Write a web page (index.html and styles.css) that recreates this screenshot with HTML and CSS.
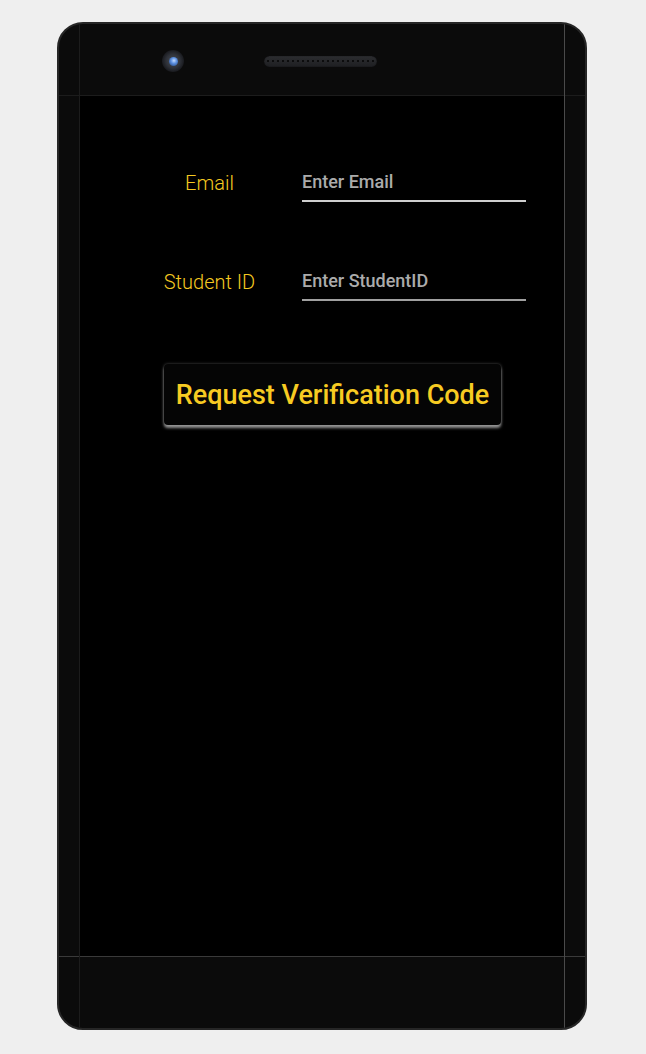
FILE: index.html
```html
<!DOCTYPE html>
<html lang="en">
<head>
<meta charset="utf-8">
<title>Request Verification Code</title>
<link rel="stylesheet" href="styles.css">
</head>
<body>
<div class="phone">
  <div class="phone-top">
    <div class="camera"><div class="lens"></div></div>
    <div class="speaker">
      <span></span><span></span><span></span><span></span><span></span><span></span><span></span><span></span><span></span><span></span><span></span><span></span><span></span><span></span><span></span><span></span><span></span><span></span><span></span><span></span><span></span><span></span>
    </div>
  </div>
  <div class="phone-middle">
    <div class="side"></div>
    <div class="screen">
      <form class="form">
        <div class="row">
          <label class="label" for="email">Email</label>
          <input class="field" id="email" type="text" placeholder="Enter Email">
        </div>
        <div class="row">
          <label class="label" for="sid">Student ID</label>
          <input class="field field-dim" id="sid" type="text" placeholder="Enter StudentID">
        </div>
        <button class="btn" type="button">Request Verification Code</button>
      </form>
    </div>
    <div class="side"></div>
  </div>
  <div class="phone-bottom"></div>
</div>
</body>
</html>
```
FILE: styles.css
```css
html, body {
  margin: 0;
  padding: 0;
  background: #efefef;
}
body {
  width: 646px;
  height: 1054px;
  overflow: hidden;
  font-family: Roboto, "Liberation Sans", sans-serif;
}
.phone {
  position: relative;
  box-sizing: border-box;
  width: 530px;
  height: 1008px;
  margin: 22px 0 0 57px;
  border: 2px solid #262626;
  border-radius: 26px;
  background: #0b0b0b;
  display: flex;
  flex-direction: column;
  overflow: hidden;
}
.phone::before,
.phone::after {
  content: "";
  position: absolute;
  top: 0;
  bottom: 0;
  width: 1px;
}
.phone::before {
  left: 20px;
  background: #1c1c1c;
}
.phone::after {
  left: 505px;
  background: #4a4a4a;
}
.phone-top {
  box-sizing: border-box;
  height: 72px;
  border-bottom: 1px solid #1c1c1c;
  display: flex;
  align-items: center;
  padding: 3px 0 0 103px;
  gap: 80px;
}
.camera {
  width: 22px;
  height: 22px;
  border-radius: 50%;
  background: radial-gradient(circle at 50% 50%, #4a4e56 0%, #2e3138 45%, #15161a 75%, #0a0a0a 100%);
  display: flex;
  align-items: center;
  justify-content: center;
}
.lens {
  width: 9px;
  height: 9px;
  border-radius: 50%;
  background: radial-gradient(circle at 55% 40%, #c4dcff 0%, #5b8fe0 40%, #1f3b6a 100%);
}
.speaker {
  box-sizing: border-box;
  width: 113px;
  height: 11px;
  border-radius: 6px;
  background: linear-gradient(#2c2d30, #1e1f22);
  box-shadow: 0 0 1px #000 inset;
  display: flex;
  align-items: center;
  justify-content: center;
  gap: 3px;
}
.speaker span {
  width: 2px;
  height: 2px;
  border-radius: 50%;
  background: #050505;
}
.phone-middle {
  height: 860px;
  display: flex;
}
.side {
  width: 21px;
}
.screen {
  width: 484px;
  background: #000;
}
.phone-bottom {
  box-sizing: border-box;
  height: 72px;
  border-top: 1px solid #3a3a3a;
}
.form {
  display: flex;
  flex-direction: column;
  padding: 71px 0 0 71px;
}
.row {
  display: flex;
  align-items: flex-end;
  height: 35px;
  margin-bottom: 64px;
}
.label {
  width: 117px;
  text-align: center;
  color: #f5c920;
  font-size: 20px;
  font-weight: 300;
  line-height: 24px;
  padding-bottom: 7px;
}
.field {
  box-sizing: border-box;
  width: 224px;
  margin-left: 34px;
  height: 35px;
  padding: 0 0 5px 0;
  border: 0;
  border-bottom: 2px solid #cfcfcf;
  background: transparent;
  color: #b0b0b0;
  font-family: Roboto, "Liberation Sans", sans-serif;
  font-size: 18px;
  font-weight: 500;
  outline: none;
}
.field-dim {
  border-bottom-color: #a0a0a0;
}
.field::placeholder {
  color: #ababab;
  opacity: 1;
}
.btn {
  align-self: flex-start;
  margin: -1px 0 0 13px;
  width: 337px;
  height: 61px;
  border: 0;
  border-radius: 4px;
  background: #050505;
  color: #f7cb22;
  font-family: Roboto, "Liberation Sans", sans-serif;
  font-size: 27px;
  font-weight: 500;
  padding: 0;
  box-shadow: 0 3px 3px rgba(190, 190, 190, 0.75), 0 0 3px rgba(170, 170, 170, 0.45);
}
```
